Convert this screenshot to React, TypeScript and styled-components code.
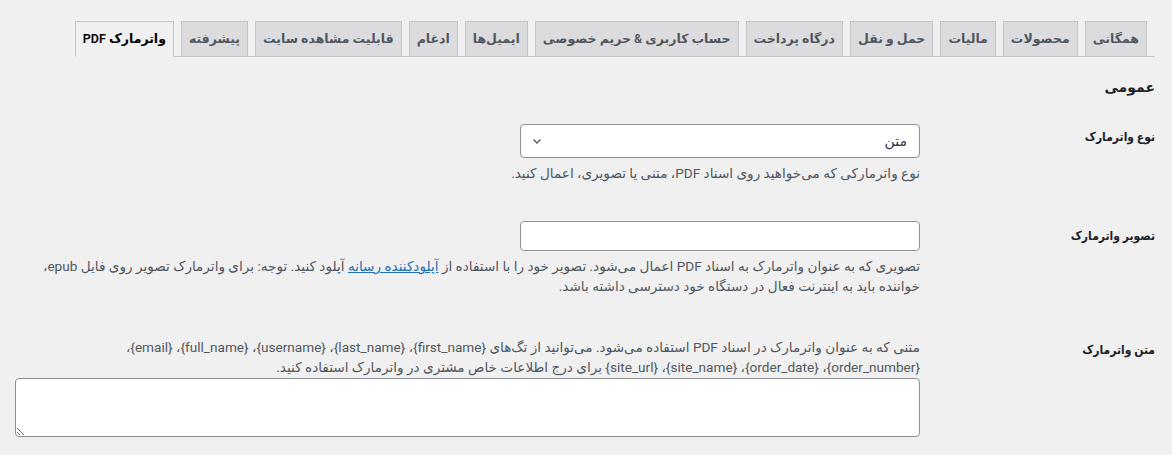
import React from 'react';
import styled, { createGlobalStyle } from 'styled-components';

const GlobalStyle = createGlobalStyle`
  html, body {
    margin: 0;
    padding: 0;
    background: #f0f0f1;
  }
  body {
    font-family: Roboto, "DejaVu Sans", sans-serif;
    color: #1d2327;
  }
`;

const tabs = [
  'همگانی',
  'محصولات',
  'مالیات',
  'حمل و نقل',
  'درگاه پرداخت',
  'حساب کاربری & حریم خصوصی',
  'ایمیل‌ها',
  'ادغام',
  'قابلیت مشاهده سایت',
  'پیشرفته',
  'واترمارک PDF',
];

export default function App() {
  return (
    <>
      <GlobalStyle />
      <Page dir='rtl'>
        <NavWrapper>
          {tabs.map((t, i) => (
            <Tab key={t} $active={i === tabs.length - 1}>
              {t}
            </Tab>
          ))}
        </NavWrapper>

        <Heading>عمومی</Heading>

        <FormTable>
          <Row $top={26} $bottom={14}>
            <Label $offset={3}>نوع واترمارک</Label>
            <Field>
              <Select>
                <span>متن</span>
                <svg width='12' height='12' viewBox='0 0 12 12'>
                  <path d='M2.5 4.5 L6 8 L9.5 4.5' fill='none' stroke='#50575e' strokeWidth='1.4' />
                </svg>
              </Select>
              <Description>
                نوع واترمارکی که می‌خواهید روی اسناد PDF، متنی یا تصویری، اعمال کنید.
              </Description>
            </Field>
          </Row>

          <Row $top={24} $bottom={14}>
            <Label $offset={5}>تصویر واترمارک</Label>
            <Field>
              <Input />
              <Description $wide>
                تصویری که به عنوان واترمارک به اسناد PDF اعمال می‌شود. تصویر خود را با استفاده از{' '}
                <Link href='#'>آپلودکننده رسانه</Link> آپلود کنید. توجه: برای واترمارک تصویر روی فایل
                epub،
                <br />
                خواننده باید به اینترنت فعال در دستگاه خود دسترسی داشته باشد.
              </Description>
            </Field>
          </Row>

          <Row $top={27} $bottom={16}>
            <Label $offset={3}>متن واترمارک</Label>
            <Field>
              <Description $wide $flush>
                متنی که به عنوان واترمارک در اسناد PDF استفاده می‌شود. می‌توانید از تگ‌های{' '}
                {'{first_name}'}، {'{last_name}'}، {'{username}'}، {'{full_name}'}، {'{email}'}،
                <br />
                {'{order_number}'}، {'{order_date}'}، {'{site_name}'}، {'{site_url}'} برای درج اطلاعات
                خاص مشتری در واترمارک استفاده کنید.
              </Description>
              <TextArea />
            </Field>
          </Row>
        </FormTable>
      </Page>
    </>
  );
}

const Page = styled.div`
  direction: rtl;
  padding: 21px 17px 0 15px;
`;

const NavWrapper = styled.nav`
  display: flex;
  gap: 7px;
  width: fit-content;
  padding-right: 8px;
  border-bottom: 1px solid #c3c4c7;
`;

const Tab = styled.a<{ $active?: boolean }>`
  display: block;
  padding: 5px 7px;
  font-size: 12.5px;
  line-height: 24px;
  font-weight: 600;
  white-space: nowrap;
  border: 1px solid #c3c4c7;
  background: ${({ $active }) => ($active ? '#f0f0f1' : '#dcdcde')};
  color: ${({ $active }) => ($active ? '#000' : '#50575e')};
  margin-bottom: ${({ $active }) => ($active ? '-1px' : '0')};
  border-bottom: ${({ $active }) => ($active ? '1px solid #f0f0f1' : 'none')};
  cursor: pointer;
`;

const Heading = styled.h2`
  margin: 19px 0 0;
  font-size: 14px;
  line-height: 22px;
  font-weight: 700;
  color: #1d2327;
`;

const FormTable = styled.div`
  display: flex;
  flex-direction: column;
`;

const Row = styled.div<{ $top: number; $bottom: number }>`
  display: grid;
  grid-template-columns: 235px 1fr;
  padding-top: ${({ $top }) => $top}px;
  padding-bottom: ${({ $bottom }) => $bottom}px;
`;

const Label = styled.div<{ $offset: number }>`
  padding-top: ${({ $offset }) => $offset}px;
  font-size: 12px;
  font-stretch: condensed;
  line-height: 20px;
  font-weight: 700;
  color: #1d2327;
`;

const Field = styled.div`
  display: flex;
  flex-direction: column;
  align-items: flex-start;
`;

const Select = styled.div`
  box-sizing: border-box;
  width: 400px;
  height: 34px;
  display: flex;
  align-items: center;
  justify-content: space-between;
  padding: 0 12px 0 10px;
  background: #fff;
  border: 1px solid #8c8f94;
  border-radius: 4px;
  font-size: 14px;
  color: #2c3338;

  svg {
    display: block;
  }
`;

const Input = styled.div`
  box-sizing: border-box;
  width: 400px;
  height: 30px;
  background: #fff;
  border: 1px solid #8c8f94;
  border-radius: 4px;
`;

const Description = styled.p<{ $wide?: boolean; $flush?: boolean }>`
  margin: ${({ $flush }) => ($flush ? '0' : '5px')} 0 0;
  font-size: 13.6px;
  line-height: 20px;
  color: #50575e;
  white-space: ${({ $wide }) => ($wide ? 'normal' : 'nowrap')};
`;

const Link = styled.a`
  color: #2271b1;
  text-decoration: underline;
`;

const TextArea = styled.textarea`
  box-sizing: border-box;
  display: block;
  width: 100%;
  height: 59px;
  margin-top: 1px;
  background: #fff;
  border: 1px solid #8c8f94;
  border-radius: 4px;
  font-family: inherit;
`;
